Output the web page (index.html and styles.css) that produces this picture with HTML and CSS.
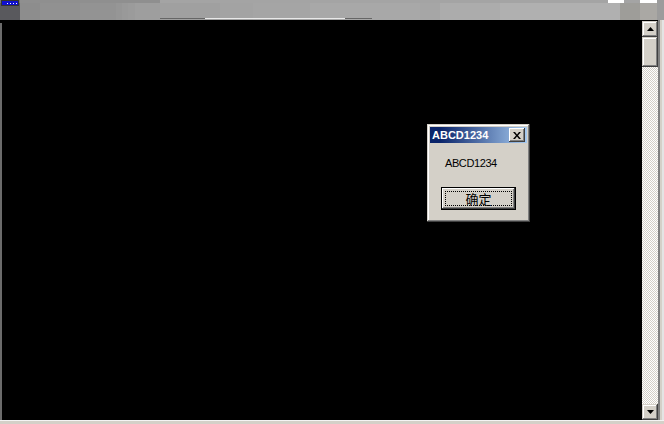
FILE: index.html
```html
<!DOCTYPE html>
<html>
<head>
<meta charset="utf-8">
<link rel="stylesheet" href="styles.css">
</head>
<body>
<div class="frame">
  <div class="topbar">
    <div class="tb-icon"><span></span><span></span><span></span><span></span></div>
  </div>
  <div class="main">
    <div class="left-edge"></div>
    <div class="screen">
      <div class="dialog">
        <div class="titlebar">
          <span class="title">ABCD1234</span>
          <span class="close">
            <svg width="8" height="7" viewBox="0 0 8 7"><path d="M0 0h2l2 2.5 2-2.5h2l-3 3.5 3 3.5h-2l-2-2.5-2 2.5h-2l3-3.5z" fill="#000"/></svg>
          </span>
        </div>
        <div class="message">ABCD1234</div>
        <div class="btn-row">
          <div class="ok"><div class="ok-inner"><span>确定</span></div></div>
        </div>
      </div>
    </div>
    <div class="scrollbar">
      <div class="sb-btn"><svg width="7" height="4" viewBox="0 0 7 4"><path d="M3.5 0L7 4H0z" fill="#000"/></svg></div>
      <div class="sb-thumb"></div>
      <div class="sb-track"></div>
      <div class="sb-btn"><svg width="7" height="4" viewBox="0 0 7 4"><path d="M0 0h7L3.5 4z" fill="#000"/></svg></div>
    </div>
    <div class="right-edge"></div>
  </div>
  <div class="bottom"></div>
</div>
</body>
</html>
```
FILE: styles.css
```css
html, body {
  margin: 0;
  padding: 0;
  background: #000;
}
.frame {
  width: 664px;
  height: 424px;
  overflow: hidden;
  display: flex;
  flex-direction: column;
  font-family: "Liberation Sans", Arial, sans-serif;
}
.topbar {
  height: 20px;
  flex: none;
  position: relative;
  background: linear-gradient(to right,
    #59595d 0 20px, #8d8d8d 20px 40px, #919191 40px 80px, #939393 80px 116px,
    #969696 116px 122px, #999 122px 128px, #9b9b9b 128px 135px, #9e9e9e 135px 160px,
    #a0a0a0 160px 220px, #a3a3a3 220px 253px, #a5a5a5 253px 310px, #a8a8a8 310px 420px,
    #a6a6a6 420px 440px, #acacac 440px 500px, #b0b0b0 500px 620px, #9e9d99 620px 640px,
    #aaa8a4 640px 657px, #9c9c9c 657px 664px);
}
.topbar::before {
  content: "";
  position: absolute;
  left: 0;
  top: 0;
  width: 664px;
  height: 3px;
  background: linear-gradient(to right, #777 0 20px, #8f8f8f 20px 160px, #a4a4a4 160px 608px, #fff 608px 624px, #a4a4a4 624px 640px, #fff 640px 657px, #9c9c9c 657px);
}
.topbar::after {
  content: "";
  position: absolute;
  left: 160px;
  top: 18px;
  width: 212px;
  height: 1px;
  background: linear-gradient(to right, #666 0 45px, #e8e8e8 45px 185px, #666 185px);
}
.tb-icon {
  position: absolute;
  left: 2px;
  top: 1px;
  width: 16px;
  height: 4px;
  background: #1010d0;
  box-shadow: 0 0 0 1px #333;
  display: flex;
  gap: 2px;
  align-items: center;
  padding-left: 5px;
  box-sizing: border-box;
  z-index: 1;
}
.tb-icon span {
  width: 1px;
  height: 1px;
  background: #fff;
}
.main {
  height: 400px;
  flex: none;
  display: flex;
}
.left-edge {
  width: 2px;
  background: linear-gradient(to bottom, #000 0 3px, #6b6b6b 3px, #6b6b6b 100%);
  flex: none;
}
.screen {
  flex: 1;
  background: #000;
  position: relative;
}
.dialog {
  position: absolute;
  left: 425px;
  top: 104px;
  width: 103px;
  height: 98px;
  box-sizing: border-box;
  background: #d4d0c8;
  padding: 3px;
  box-shadow: inset -1px -1px #404040, inset 1px 1px #d4d0c8, inset -2px -2px #808080, inset 2px 2px #fff;
  display: flex;
  flex-direction: column;
}
.titlebar {
  height: 16px;
  background: linear-gradient(to right, #0a246a 10%, #a6caf0);
  display: flex;
  align-items: center;
  justify-content: space-between;
  padding: 0 2px 0 2px;
  flex: none;
}
.title {
  color: #fff;
  font-weight: bold;
  font-size: 11px;
  line-height: 13px;
}
.close {
  width: 16px;
  height: 14px;
  box-sizing: border-box;
  background: #d4d0c8;
  box-shadow: inset -1px -1px #404040, inset 1px 1px #fff, inset -2px -2px #808080;
  display: flex;
  align-items: center;
  justify-content: center;
}
.message {
  font-size: 11px;
  line-height: 13px;
  color: #000;
  padding: 14px 0 0 15px;
  letter-spacing: -0.4px;
}
.btn-row {
  padding: 17px 0 0 11px;
}
.ok {
  width: 75px;
  height: 23px;
  box-sizing: border-box;
  border: 1px solid #000;
  background: #d4d0c8;
  box-shadow: inset -1px -1px #404040, inset 1px 1px #fff, inset -2px -2px #808080;
  padding: 3px;
}
.ok-inner {
  height: 100%;
  box-sizing: border-box;
  border: 1px dotted #000;
  display: flex;
  align-items: center;
  justify-content: center;
  font-family: "Noto Sans CJK SC", sans-serif;
  font-size: 13px;
  line-height: 13px;
  color: #000;
}
.scrollbar {
  width: 16px;
  flex: none;
  display: flex;
  flex-direction: column;
  padding-top: 1px;
  box-sizing: border-box;
  background: #000;
}
.sb-btn {
  height: 16px;
  flex: none;
  background: #d4d0c8;
  box-sizing: border-box;
  box-shadow: inset -1px -1px #404040, inset 1px 1px #d4d0c8, inset -2px -2px #808080, inset 2px 2px #fff;
  display: flex;
  align-items: center;
  justify-content: center;
}
.sb-thumb {
  height: 30px;
  flex: none;
  background: #d4d0c8;
  box-shadow: inset -1px -1px #404040, inset 1px 1px #d4d0c8, inset -2px -2px #808080, inset 2px 2px #fff;
}
.sb-track {
  flex: 1;
  background-color: #fff;
  background-image: conic-gradient(#d4d0c8 25%, #fff 0 50%, #d4d0c8 0 75%, #fff 0);
  background-size: 2px 2px;
}
.right-edge {
  width: 6px;
  flex: none;
  background: linear-gradient(to right, #808080 0 2px, #d4d0c8 2px 4px, #e4e4e4 4px);
}
.bottom {
  height: 4px;
  flex: none;
  background: linear-gradient(to bottom, #f4f4f4 0 1px, #d4d0c8 1px);
}
```
